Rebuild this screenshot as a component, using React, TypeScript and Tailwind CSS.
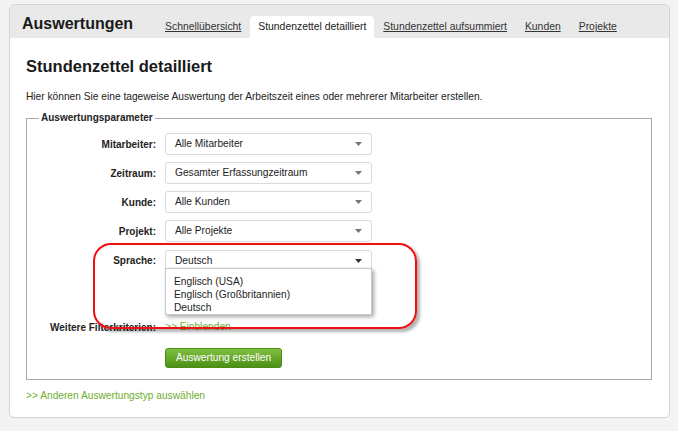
import React from "react";

function Arrow({ dark = false }: { dark?: boolean }) {
  return (
    <svg width="7" height="4" viewBox="0 0 7 4" className="shrink-0">
      <path d="M0 0 H7 L3.5 4 Z" fill={dark ? "#333" : "#777"} />
    </svg>
  );
}

function Select({ value, dark = false }: { value: string; dark?: boolean }) {
  return (
    <div className="w-[207px] h-[22px] border border-[#dadada] rounded-[3px] bg-white flex items-center justify-between pl-[9px] pr-[9px] text-[10.2px] text-[#222]">
      <span>{value}</span>
      <Arrow dark={dark} />
    </div>
  );
}

function Label({ children }: { children: React.ReactNode }) {
  return (
    <div className="w-[129px] text-right font-bold text-[10px] text-[#222]">{children}</div>
  );
}

export default function App() {
  const tabs = [
    { t: "Schnellübersicht", active: false },
    { t: "Stundenzettel detailliert", active: true },
    { t: "Stundenzettel aufsummiert", active: false },
    { t: "Kunden", active: false },
    { t: "Projekte", active: false },
  ];
  const rows = [
    ["Mitarbeiter:", "Alle Mitarbeiter"],
    ["Zeitraum:", "Gesamter Erfassungzeitraum"],
    ["Kunde:", "Alle Kunden"],
    ["Projekt:", "Alle Projekte"],
  ];
  return (
    <div className="relative w-[678px] h-[431px] bg-[#f3f3f3] pt-[4px] pl-[9px] overflow-hidden font-['Liberation_Sans',Arial,sans-serif] text-[#222]">
      <div className="w-[661px] h-[414px] border border-[#d4d4d4] rounded-[5px] bg-white overflow-hidden">
        {/* header */}
        <div className="h-[33px] bg-[#e9e9e9] flex items-end pl-[12px]">
          <div className="self-center mt-[4px] text-[16px] font-bold text-[#1a1a1a] w-[134px]">Auswertungen</div>
          <div className="flex items-end h-full">
            {tabs.map((tab) => (
              <div
                key={tab.t}
                className={
                  tab.active
                    ? "h-[22px] px-[8px] flex items-center bg-white rounded-t-[4px] text-[10.4px] text-[#222]"
                    : "h-[22px] px-[9px] flex items-center text-[10.4px] text-[#333] underline"
                }
              >
                {tab.t}
              </div>
            ))}
          </div>
        </div>
        {/* body */}
        <div className="pl-[16px] pr-[17px]">
          <div className="mt-[18px] text-[16.5px] leading-[20px] font-bold text-[#1a1a1a]">Stundenzettel detailliert</div>
          <div className="mt-[14px] text-[10.2px] leading-[13px] text-[#222]">
            Hier können Sie eine tageweise Auswertung der Arbeitszeit eines oder mehrerer Mitarbeiter erstellen.
          </div>
          <fieldset className="mt-[9px] border border-[#a8a8a8] w-[626px] h-[268px] pt-[9px]">
            <legend className="ml-[12px] px-[2px] text-[10px] font-bold leading-[12px] text-[#222]">Auswertungsparameter</legend>
            <div className="flex flex-col gap-[7px]">
              {rows.map(([l, v]) => (
                <div key={l} className="flex items-center gap-[9px]">
                  <Label>{l}</Label>
                  <Select value={v} />
                </div>
              ))}
              <div className="flex items-start gap-[9px] mt-[1px]">
                <div className="w-[129px] h-[20px] flex items-center justify-end font-bold text-[10px]">Sprache:</div>
                <div className="relative">
                  <Select value="Deutsch" dark />
                  <div className="absolute left-0 top-[18px] w-[207px] h-[47px] bg-white border border-[#c8c8c8] shadow-[2px_2px_4px_rgba(0,0,0,0.35)] pl-[8px] pt-[6px] text-[10.2px] leading-[13px] text-[#222]">
                    <div>Englisch (USA)</div>
                    <div>Englisch (Großbritannien)</div>
                    <div>Deutsch</div>
                  </div>
                </div>
              </div>
              <div className="flex items-center h-[22px] gap-[9px] mt-[37px]">
                <Label>Weitere Filterkriterien:</Label>
                <div className="text-[10.2px] text-[#6eae2f]">&gt;&gt; Einblenden</div>
              </div>
              <div className="flex gap-[9px] mt-[3px]">
                <div className="w-[129px]" />
                <div className="w-[117px] h-[20px] rounded-[3px] border border-[#4b8c15] bg-linear-to-b from-[#80c040] to-[#4d9015] flex items-center justify-center text-white text-[10.2px]">
                  Auswertung erstellen
                </div>
              </div>
            </div>
          </fieldset>
          <div className="mt-[8px] text-[10.2px] text-[#6eae2f]">&gt;&gt; Anderen Auswertungstyp auswählen</div>
        </div>
      </div>
      {/* red annotation */}
      <div className="absolute left-[93px] top-[243px] w-[324px] h-[86px] border-2 border-[#f01010] rounded-[18px] shadow-[3px_3px_3px_rgba(0,0,0,0.3)]" />
    </div>
  );
}
